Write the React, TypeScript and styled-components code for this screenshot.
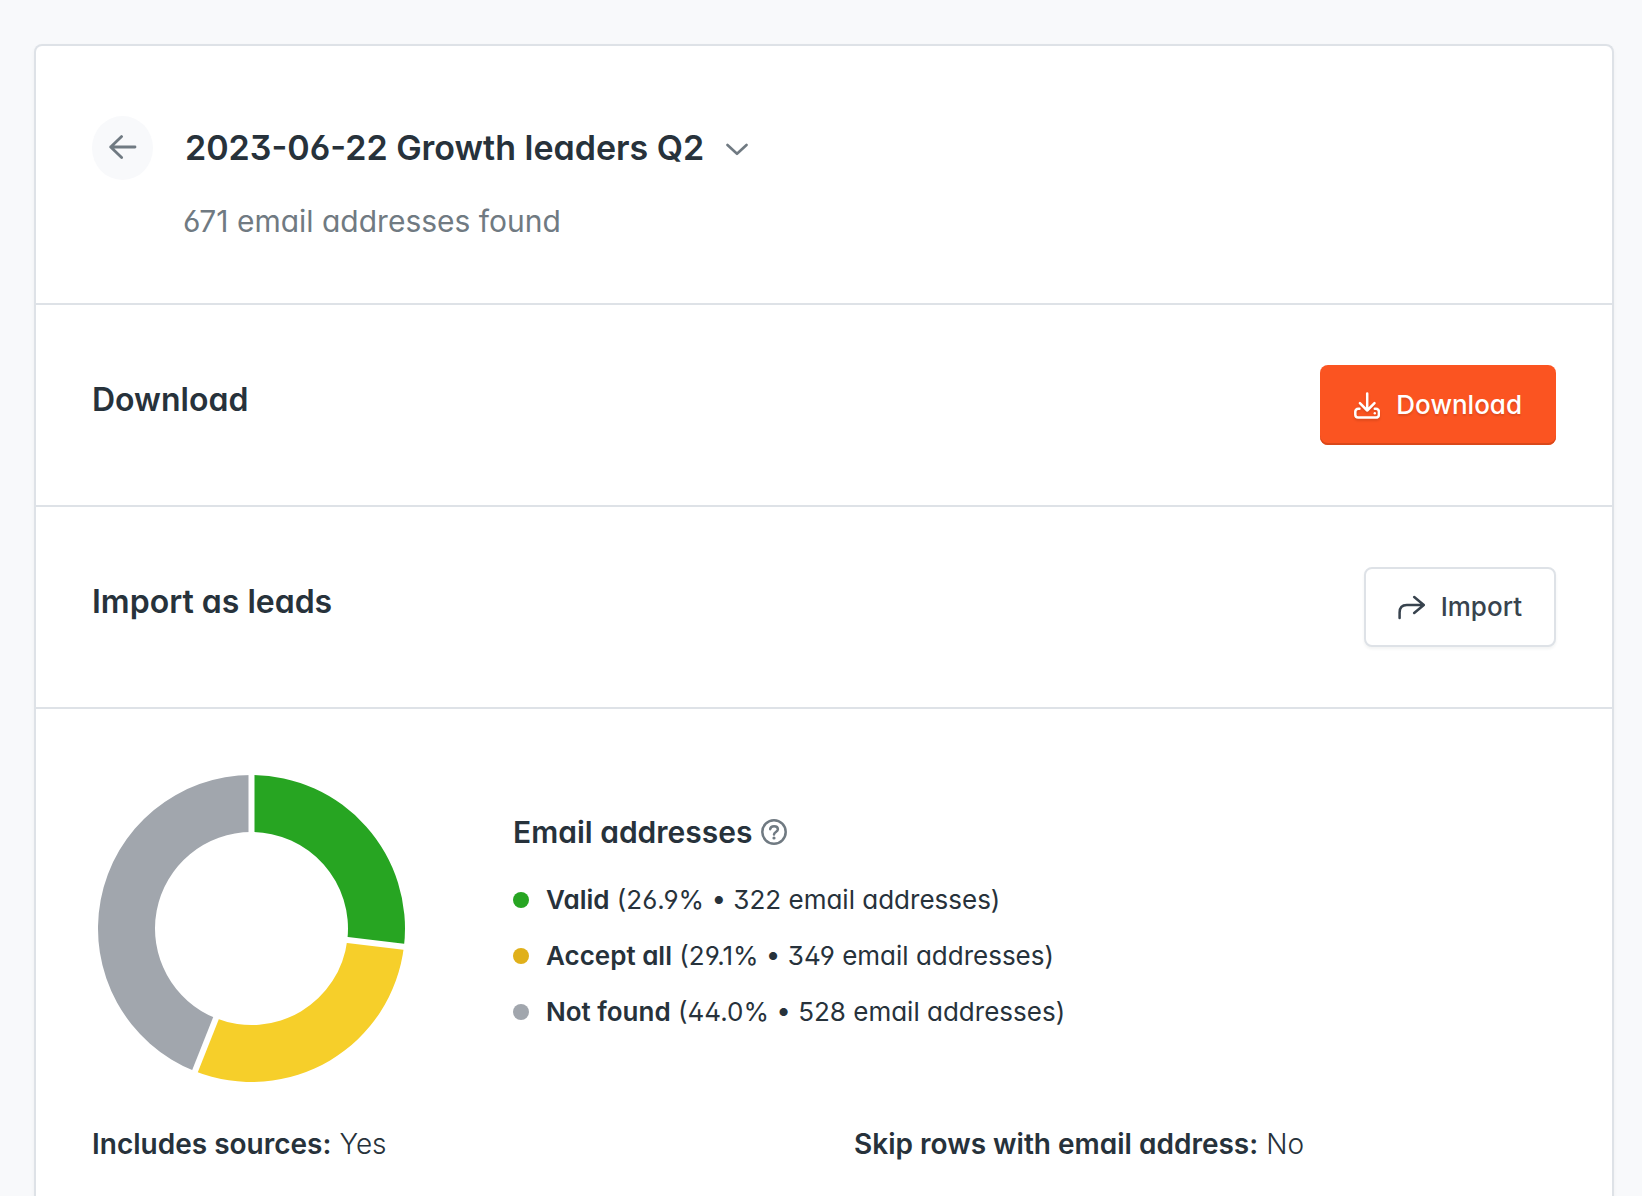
import React from "react";
import styled, { createGlobalStyle } from "styled-components";

const color = {
  page: "#f8f9fb",
  line: "#dee2e7",
  ink: "#27323b",
  button: "#38434e",
  muted: "#707a82",
  brand: "#fb5421",
  valid: "#27a522",
  acceptAll: "#f6cf2a",
  acceptAllDot: "#e0b01a",
  notFound: "#a1a6ad",
};

const GlobalStyle = createGlobalStyle`
  *, *::before, *::after { box-sizing: border-box; }
  body {
    margin: 0;
    background: ${color.page};
    color: ${color.ink};
    font-family: Inter, "Liberation Sans", sans-serif;
    font-feature-settings: "ss01", "cv11";
    -webkit-font-smoothing: antialiased;
  }
  h1, h2, h3, p, ul, dl, dd { margin: 0; padding: 0; }
  button { font: inherit; font-feature-settings: inherit; cursor: pointer; }
`;

const Page = styled.div`
  min-height: 100vh;
  display: flex;
  flex-direction: column;
  padding: 44px 28px 0 34px;
`;

const Card = styled.main`
  flex: 1;
  background: #fff;
  border: 2px solid ${color.line};
  border-bottom: 0;
  border-radius: 8px 8px 0 0;
  box-shadow: 0 2px 4px rgba(39, 50, 59, 0.04);
`;

const Header = styled.header`
  display: flex;
  align-items: flex-start;
  gap: 30px;
  padding: 70px 56px 59px;
`;

const BackButton = styled.button`
  flex: none;
  display: grid;
  place-items: center;
  width: 61px;
  height: 64px;
  padding: 0;
  border: 0;
  border-radius: 50%;
  background: ${color.page};
  color: ${color.muted};
`;

const Title = styled.h1`
  font-size: 34px;
  line-height: 64px;
  font-weight: 600;
`;

const TitleButton = styled.button`
  display: flex;
  align-items: center;
  gap: 22px;
  padding: 0 2px;
  border: 0;
  background: none;
  color: inherit;

  svg { color: ${color.muted}; }
`;

const Subtitle = styled.p`
  margin-top: 18px;
  font-size: 30px;
  line-height: 46px;
  color: ${color.muted};
`;

const Section = styled.section`
  border-top: 2px solid ${color.line};
  padding: 60px 56px;
`;

const ActionSection = styled(Section)`
  display: flex;
  align-items: center;
  justify-content: space-between;
`;

const SectionTitle = styled.h2`
  padding-bottom: 10px;
  font-size: 32px;
  line-height: 48px;
  font-weight: 600;
`;

const ActionButton = styled.button<{ $primary?: boolean }>`
  display: flex;
  align-items: center;
  gap: 16px;
  height: 80px;
  padding: ${(p) => (p.$primary ? "0 34px" : "0 32px")};
  border: 2px solid ${color.line};
  border-width: ${(p) => (p.$primary ? "0" : "2px")};
  border-radius: 8px;
  background: ${(p) => (p.$primary ? color.brand : "#fff")};
  color: ${(p) => (p.$primary ? "#fff" : color.button)};
  box-shadow: ${(p) =>
    p.$primary ? "inset 0 -2px 0 #da481a" : "0 2px 3px rgba(39, 50, 59, 0.06)"};
  text-shadow: ${(p) => (p.$primary ? "0 2px 2px rgba(0, 0, 0, 0.12)" : "none")};
  font-size: 26px;
  line-height: 40px;
  font-weight: 500;

  svg {
    filter: ${(p) => (p.$primary ? "drop-shadow(0 2px 1px rgba(0, 0, 0, 0.12))" : "none")};
  }
`;

const Summary = styled.div`
  display: flex;
  align-items: center;
  gap: 101px;
`;

const LegendBlock = styled.div`
  padding-bottom: 18px;
`;

const LegendTitle = styled.h3`
  display: flex;
  align-items: center;
  gap: 8px;
  font-size: 30px;
  line-height: 46px;
  font-weight: 600;
`;

const HelpButton = styled.button`
  display: flex;
  padding: 0;
  border: 0;
  background: none;
  color: ${color.muted};
`;

const Legend = styled.ul`
  display: grid;
  gap: 16px;
  margin-top: 25px;
  list-style: none;
`;

const LegendItem = styled.li`
  display: flex;
  align-items: center;
  gap: 17px;
  font-size: 26px;
  line-height: 40px;
`;

const Dot = styled.span<{ $fill: string }>`
  width: 16px;
  height: 16px;
  border-radius: 50%;
  background: ${(p) => p.$fill};
`;

const Strong = styled.strong`
  font-weight: 600;
`;

const Options = styled.dl`
  display: grid;
  grid-template-columns: 1fr 1fr;
  gap: 60px;
  margin-top: 34px;
  font-size: 28px;
  line-height: 42px;
`;

const Option = styled.div`
  display: flex;
  gap: 8px;

  dt { font-weight: 600; }
  dd { font-weight: 300; }
`;

const Stroke = ({
  width,
  height,
  weight = 2.5,
  children,
}: {
  width: number;
  height: number;
  weight?: number;
  children: React.ReactNode;
}) => (
  <svg
    width={width}
    height={height}
    viewBox={`0 0 ${width} ${height}`}
    fill="none"
    stroke="currentColor"
    strokeWidth={weight}
    strokeLinecap="round"
    strokeLinejoin="round"
    aria-hidden="true"
  >
    {children}
  </svg>
);

const BackIcon = () => (
  <Stroke width={28} height={26} weight={2.8}>
    <path d="M26 12H1.7M12.6 1.6L1.7 12L12.6 22.6" />
  </Stroke>
);

const ChevronIcon = () => (
  <Stroke width={22} height={16} weight={2.6}>
    <path d="M1.5 5L11 13.8L20.5 5" />
  </Stroke>
);

const DownloadIcon = () => (
  <Stroke width={26} height={27}>
    <path d="M13.2 1.4V18.5M5.9 11.2L13.2 18.5L20.5 11.2" />
    <path d="M5.4 16.8H4.2A2.9 2.9 0 0 0 1.3 19.7V22.8A2.9 2.9 0 0 0 4.2 25.6H22A2.9 2.9 0 0 0 24.9 22.8V19.7A2.9 2.9 0 0 0 22 16.8H20.8" />
    <circle cx="20.8" cy="21.2" r="1.2" fill="currentColor" stroke="none" />
  </Stroke>
);

const ImportIcon = () => (
  <Stroke width={27} height={26}>
    <path d="M1.6 24V18.5C1.6 13.4 3.8 11 8.8 11H25.4M16.2 3L25.8 11L16.2 19" />
  </Stroke>
);

const HelpIcon = () => (
  <Stroke width={26} height={26}>
    <circle cx="13" cy="13" r="11.7" />
    <path d="M9.2 10.2C9.4 8.2 11 7.2 13.1 7.2C15.3 7.2 16.9 8.4 16.9 10.3C16.9 12.9 13 13 13 15.4" />
    <circle cx="13" cy="19" r="1.6" fill="currentColor" stroke="none" />
  </Stroke>
);

const results = [
  { label: "Valid", share: 26.9, count: 322, fill: color.valid, dot: color.valid },
  { label: "Accept all", share: 29.1, count: 349, fill: color.acceptAll, dot: color.acceptAllDot },
  { label: "Not found", share: 44.0, count: 528, fill: color.notFound, dot: color.notFound },
];

const CENTER = 159.5;
const OUTER = 153.5;
const INNER = 96.5;

const point = (share: number, radius: number) => {
  const angle = (share / 100) * Math.PI * 2;
  return `${CENTER + radius * Math.sin(angle)} ${CENTER - radius * Math.cos(angle)}`;
};

const Donut = () => {
  let total = 0;
  const slices = results.map((r) => {
    const from = total;
    total += r.share;
    return { ...r, from, to: total };
  });
  return (
    <svg width="320" height="320" viewBox="0 0 320 320" role="img" aria-label="Email address results">
      {slices.map((s) => (
        <path
          key={s.label}
          fill={s.fill}
          d={`M${point(s.from, OUTER)}A${OUTER} ${OUTER} 0 0 1 ${point(s.to, OUTER)}L${point(s.to, INNER)}A${INNER} ${INNER} 0 0 0 ${point(s.from, INNER)}Z`}
        />
      ))}
      {slices.map((s) => (
        <path
          key={s.label}
          stroke="#fff"
          strokeWidth="6"
          d={`M${point(s.from, INNER - 4)}L${point(s.from, OUTER + 4)}`}
        />
      ))}
    </svg>
  );
};

export default function App() {
  return (
    <>
      <GlobalStyle />
      <Page>
        <Card>
          <Header>
            <BackButton aria-label="Back">
              <BackIcon />
            </BackButton>
            <div>
              <Title>
                <TitleButton>
                  2023-06-22 Growth leaders Q2
                  <ChevronIcon />
                </TitleButton>
              </Title>
              <Subtitle>671 email addresses found</Subtitle>
            </div>
          </Header>

          <ActionSection>
            <SectionTitle>Download</SectionTitle>
            <ActionButton $primary>
              <DownloadIcon />
              Download
            </ActionButton>
          </ActionSection>

          <ActionSection>
            <SectionTitle>Import as leads</SectionTitle>
            <ActionButton>
              <ImportIcon />
              Import
            </ActionButton>
          </ActionSection>

          <Section>
            <Summary>
              <Donut />
              <LegendBlock>
                <LegendTitle>
                  Email addresses
                  <HelpButton aria-label="Help">
                    <HelpIcon />
                  </HelpButton>
                </LegendTitle>
                <Legend>
                  {results.map((r) => (
                    <LegendItem key={r.label}>
                      <Dot $fill={r.dot} />
                      <span>
                        <Strong>{r.label}</Strong> ({r.share.toFixed(1)}% • {r.count} email addresses)
                      </span>
                    </LegendItem>
                  ))}
                </Legend>
              </LegendBlock>
            </Summary>
            <Options>
              <Option>
                <dt>Includes sources:</dt>
                <dd>Yes</dd>
              </Option>
              <Option>
                <dt>Skip rows with email address:</dt>
                <dd>No</dd>
              </Option>
            </Options>
          </Section>
        </Card>
      </Page>
    </>
  );
}
